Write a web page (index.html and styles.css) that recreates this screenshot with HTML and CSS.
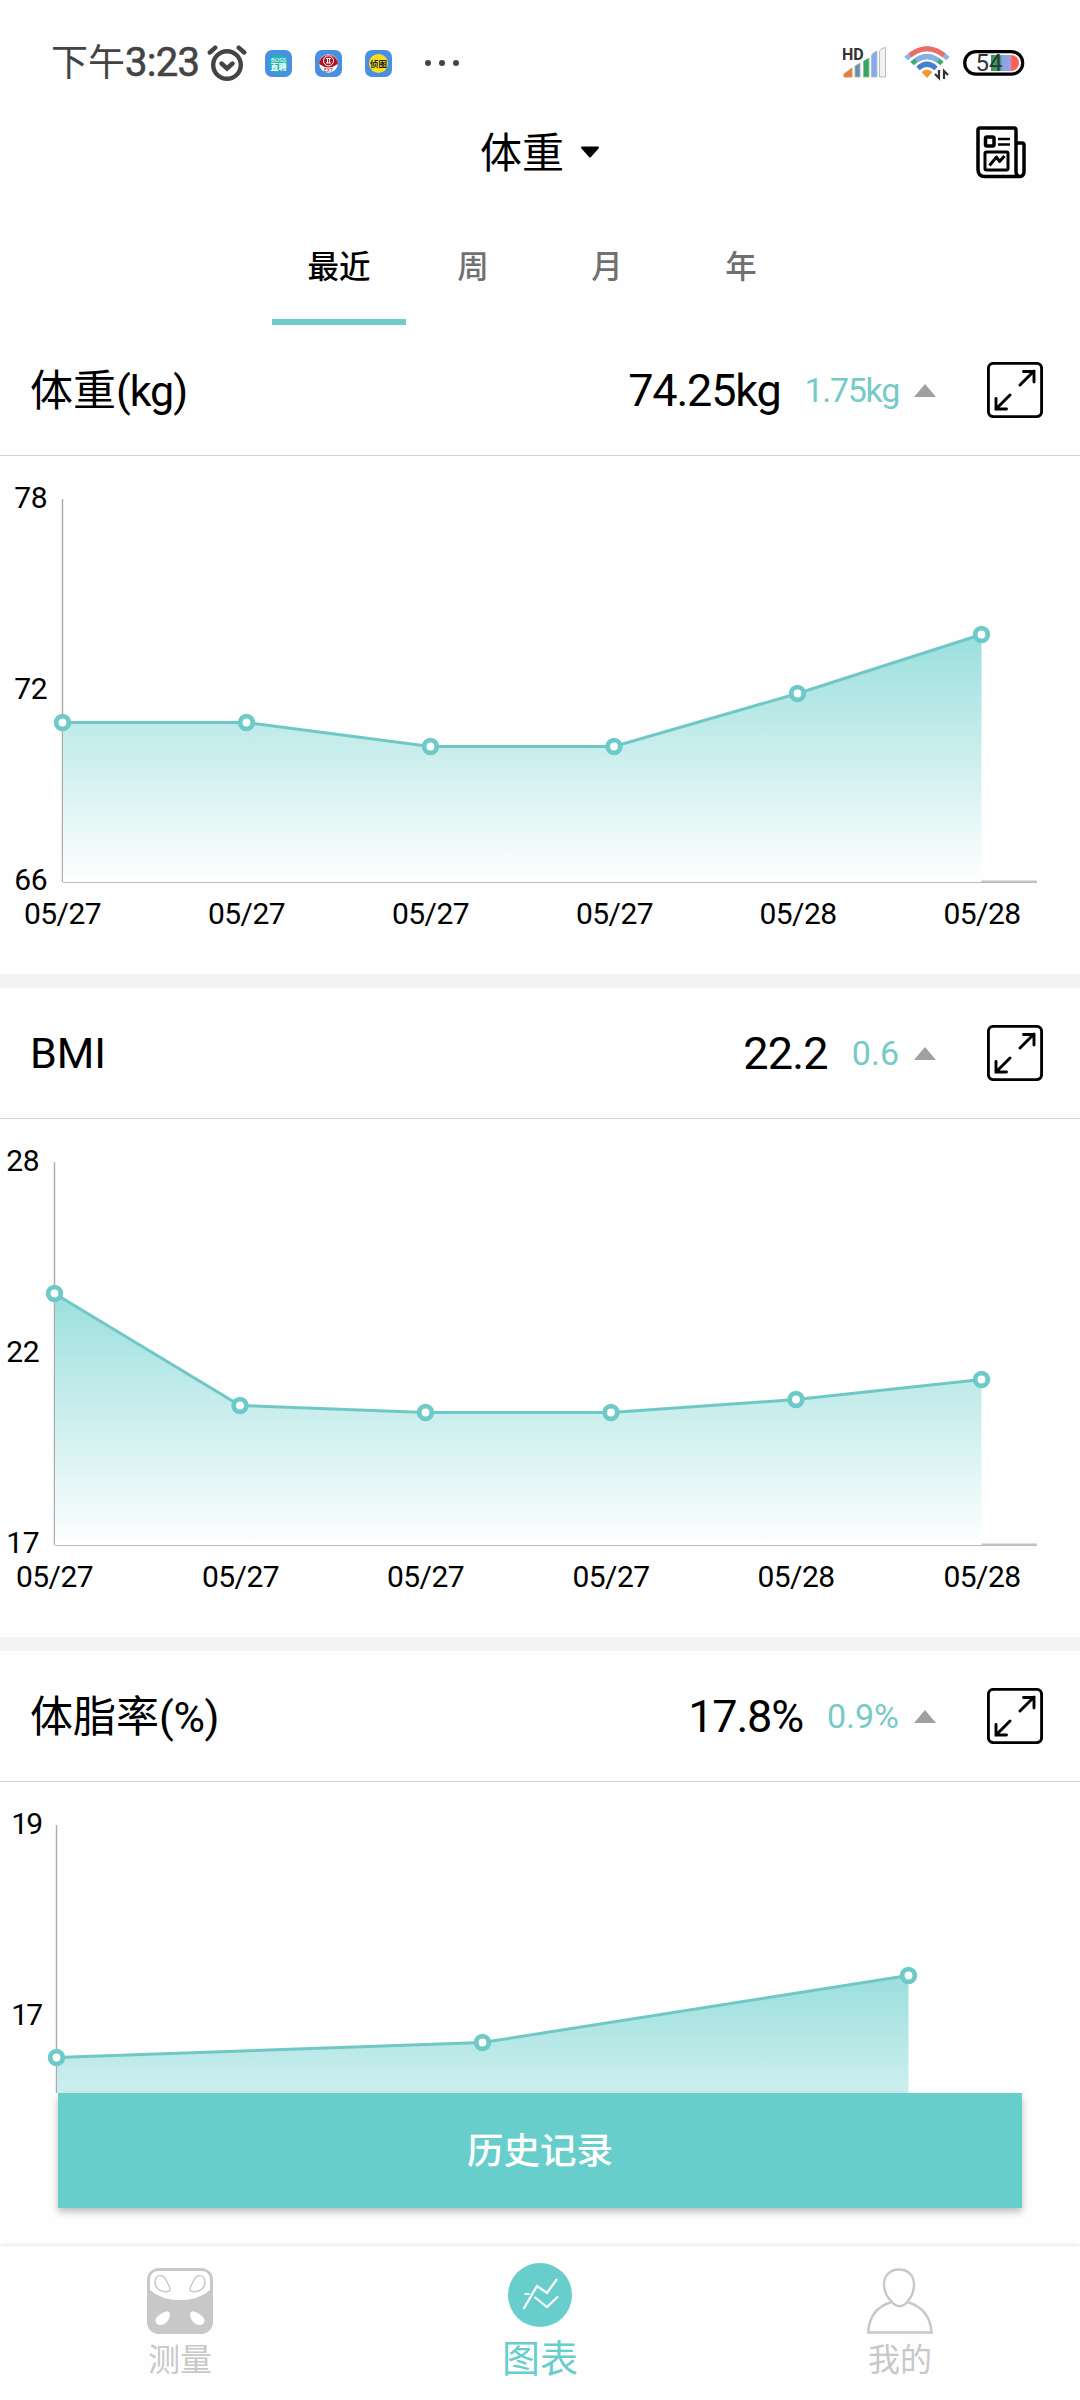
FILE: index.html
```html
<!DOCTYPE html>
<html lang="zh-CN">
  <head>
    <meta charset="UTF-8" />
    <title>体重图表</title>
    <link rel="stylesheet" href="styles.css">
  </head>
  <body>
    <div class="status-bar">
      <div class="status-left">
        <span class="time">下午<span class="digits">3:23</span></span>
        <svg class="alarm" width="40" height="36" viewBox="0 0 40 36" fill="none" stroke="#444" stroke-width="4.4" stroke-linecap="round">
          <circle cx="20" cy="20" r="13.800" />
          <path d="M14.5 18.500l5.500 5 5.500-5M2.800 7.500l5.500-4.800M37.200 7.500l-5.500-4.800" />
        </svg>
        <svg class="app-icon" width="27" height="27" viewBox="0 0 27 27">
          <rect width="27" height="27" rx="7" fill="#4a90e2" />
          <circle cx="13.5" cy="13.5" r="9.5" fill="#21b5b5" />
          <text x="13.5" y="11.5" font-size="6" textLength="15">BOSS</text>
          <text x="13.5" y="19.5" font-size="8" font-weight="700">直聘</text>
        </svg>
        <svg class="app-icon" width="27" height="27" viewBox="0 0 27 27">
          <rect width="27" height="27" rx="7" fill="#4a90e2" />
          <circle cx="13.5" cy="13.5" r="9.3" fill="#fff" />
          <path d="M4.2 14a9.3 9.3 0 1 1 18.6 0q-9.3 7-18.6 0z" fill="#b0131d" />
          <circle cx="13.5" cy="10.8" r="5" fill="none" stroke="#fff" stroke-width="1" />
          <path d="M11 8.500h5M11 13h5M12.500 8.500v4.500M14.500 8.500v4.500" stroke="#fff" stroke-width="1" />
          <text class="red" x="13.5" y="22" font-size="5">EXT</text>
        </svg>
        <svg class="app-icon" width="27" height="27" viewBox="0 0 27 27">
          <rect width="27" height="27" rx="7" fill="#4a90e2" />
          <circle cx="13.5" cy="13.5" r="9.5" fill="#f7df1e" />
          <text class="dark" x="13.5" y="16.5" font-size="8.5" font-weight="700">侦图</text>
        </svg>
        <svg class="dots" width="36" height="8" viewBox="0 0 36 8" fill="#444">
          <circle cx="4" cy="4" r="3" />
          <circle cx="18" cy="4" r="3" />
          <circle cx="32" cy="4" r="3" />
        </svg>
      </div>
      <div class="status-right">
        <svg width="45" height="34" viewBox="0 0 45 34">
          <path d="M2 31v-3l8-6v9z" fill="#f0793a" stroke="#c99a6a" />
          <path d="M13 31V20l5-3v14z" fill="#5b8fc4" stroke="#b8b884" />
          <path d="M21.500 31V15l5.500-3v19z" fill="#36a463" stroke="#8fbf9f" />
          <path d="M29.500 31V10q0-3 5.500-5v26z" fill="#84a9ea" stroke="#b4bccb" />
          <path d="M37.500 31V6q0-3.500 6-4.500v29.500z" fill="#eff4f2" stroke="#b9bdbb" />
          <text class="hd" x="0" y="13.500">HD</text>
        </svg>
        <svg class="wifi" width="48" height="36" viewBox="0 0 48 36" fill="none" stroke-width="5">
          <path d="M2 13.500Q23 -6 44 13.500" stroke="#93b2e8" />
          <path d="M6 10.300Q23 -2.800 40 10.300" stroke="#ee6b66" />
          <path d="M8 18.500Q23 4.500 38 18.500" stroke="#3faa6c" />
          <path d="M12 15.500Q23 7.700 34 15.500" stroke="#86aee8" />
          <path d="M14 23.500Q23 15 32 23.500" stroke="#4581d0" />
          <path d="M23 33l-5.500-6q5.500-5 11 0z" fill="#f39a2e" />
          <path d="M35 25v8l-4-4M40 34v-8l4 4" stroke="#333" stroke-width="2.200" />
        </svg>
        <svg width="62" height="26" viewBox="0 0 62 26">
          <defs>
            <linearGradient id="power">
              <stop offset="0" stop-color="#2f9e5c" />
              <stop offset="0.330" stop-color="#38a566" />
              <stop offset="0.400" stop-color="#7fa5ea" />
              <stop offset="0.680" stop-color="#a3a0dd" />
              <stop offset="0.760" stop-color="#fb5f55" />
              <stop offset="1" stop-color="#fb5f55" />
            </linearGradient>
          </defs>
          <path d="M28 5h20a8 8 0 0 1 0 16h-20z" fill="url(#power)" />
          <rect x="1.700" y="1.700" width="58" height="22.500" rx="11.200" fill="none" stroke="#000" stroke-width="3.200" />
          <text class="battery" x="12.500" y="21">54</text>
        </svg>
      </div>
    </div>

    <header>
      <h1>体重</h1>
      <svg class="caret" width="20" height="13" viewBox="0 0 20 13">
        <path d="M2 1.500h16l-8 9z" stroke="#000" stroke-width="2" stroke-linejoin="round" />
      </svg>
      <svg class="report" width="50" height="53" viewBox="0 0 50 53" fill="none" stroke="#000" stroke-width="3.500" stroke-linejoin="round">
        <path d="M44 50.500H9q-7 0-7-7V4q0-2 2-2h34q2 0 2 2v41q0 5.500 4 5.500t4-5.500V19q0-2-2-2h-6" />
        <rect x="9.500" y="11" width="8.500" height="9" rx="1.500" />
        <rect x="9" y="26" width="23" height="18" rx="1.500" stroke-width="3" />
        <path d="M22 13h12M22 18.500h12" stroke-width="2.400" />
        <path d="M13.500 39.500l7-8.500 3 4.500 5-5.500" stroke-width="3" />
      </svg>
    </header>

    <nav class="tabs">
      <a class="tab active">最近</a>
      <a class="tab">周</a>
      <a class="tab">月</a>
      <a class="tab">年</a>
    </nav>

    <!-- shared shapes -->
    <svg class="defs" width="0" height="0">
      <defs>
        <linearGradient id="area" x1="0" y1="0" x2="0" y2="1">
          <stop offset="0" stop-color="#9adfdd" />
          <stop offset="1" stop-color="#fff" />
        </linearGradient>
        <symbol id="expand" viewBox="0 0 56 56">
          <rect x="1.400" y="1.400" width="53.200" height="53.200" rx="5" />
          <path d="M33 23L47 9M36.500 9.500h10.500v10.500M23 33L9 47M9 36.500v10.500h10.500" />
        </symbol>
      </defs>
    </svg>

    <main class="charts">
      <section class="card">
        <div class="card-header">
          <h2 class="raised">体重<span class="unit">(kg)</span></h2>
          <span class="value tight">74.25kg</span>
          <span class="delta tight">1.75kg</span>
          <i class="up"></i>
          <svg class="expand"><use href="#expand" /></svg>
        </div>
        <svg class="chart" width="1080" height="518" viewBox="0 0 1080 518">
          <path class="y-axis" d="M62.500 43V426" />
          <path class="x-axis-end" d="M981 425.500H1037" />
          <path class="area" d="M63 266.500L246.500 266.500 430.500 290.500 614 290.500 797.500 237.500 981.500 178.500V426H63z" />
          <path class="x-axis" d="M63 426.500H1037" />
          <path class="line" d="M62.500 266.500L246.500 266.500 430.500 290.500 614 290.500 797.500 237.500 981.500 178.500" />
          <g class="points">
            <circle cx="62.500" cy="266.500" r="6.300" />
            <circle cx="246.500" cy="266.500" r="6.300" />
            <circle cx="430.500" cy="290.500" r="6.300" />
            <circle cx="614" cy="290.500" r="6.300" />
            <circle cx="797.500" cy="237.500" r="6.300" />
            <circle cx="981.500" cy="178.500" r="6.300" />
          </g>
          <g class="y-labels">
            <text x="47" y="52">78</text>
            <text x="47" y="243">72</text>
            <text x="47" y="434">66</text>
          </g>
          <g class="x-labels">
            <text x="62.500" y="468">05/27</text>
            <text x="246.500" y="468">05/27</text>
            <text x="430.500" y="468">05/27</text>
            <text x="614.500" y="468">05/27</text>
            <text x="798" y="468">05/28</text>
            <text x="982" y="468">05/28</text>
          </g>
        </svg>
      </section>

      <section class="card">
        <div class="card-header">
          <h2>BMI</h2>
          <span class="value medium">22.2</span>
          <span class="delta">0.6</span>
          <i class="up"></i>
          <svg class="expand"><use href="#expand" /></svg>
        </div>
        <svg class="chart" width="1080" height="518" viewBox="0 0 1080 518">
          <path class="y-axis" d="M54.500 43V426" />
          <path class="x-axis-end" d="M981 425.500H1037" />
          <path class="area" d="M55 174.500L240 286.500 425.500 293.500 611 293.500 796 280.500 981.500 260.500V426H55z" />
          <path class="x-axis" d="M55 426.500H1037" />
          <path class="line" d="M54.500 174.500L240 286.500 425.500 293.500 611 293.500 796 280.500 981.500 260.500" />
          <g class="points">
            <circle cx="54.500" cy="174.500" r="6.300" />
            <circle cx="240" cy="286.500" r="6.300" />
            <circle cx="425.500" cy="293.500" r="6.300" />
            <circle cx="611" cy="293.500" r="6.300" />
            <circle cx="796" cy="280.500" r="6.300" />
            <circle cx="981.500" cy="260.500" r="6.300" />
          </g>
          <g class="y-labels">
            <text x="39" y="52">28</text>
            <text x="39" y="243">22</text>
            <text x="39" y="434">17</text>
          </g>
          <g class="x-labels">
            <text x="54.500" y="468">05/27</text>
            <text x="240.500" y="468">05/27</text>
            <text x="425.500" y="468">05/27</text>
            <text x="611" y="468">05/27</text>
            <text x="796" y="468">05/28</text>
            <text x="982" y="468">05/28</text>
          </g>
        </svg>
      </section>

      <section class="card">
        <div class="card-header">
          <h2 class="raised">体脂率<span class="unit percent">(%)</span></h2>
          <span class="value tight">17.8%</span>
          <span class="delta">0.9%</span>
          <i class="up"></i>
          <svg class="expand"><use href="#expand" /></svg>
        </div>
        <svg class="chart" width="1080" height="518" viewBox="0 0 1080 518">
          <path class="y-axis" d="M56.500 43V426" />
          <path class="area" d="M57 275.500L482.500 260.500 908.500 193.500V426H57z" />
          <path class="line" d="M56.500 275.500L482.500 260.500 908.500 193.500" />
          <g class="points">
            <circle cx="56.500" cy="275.500" r="6.300" />
            <circle cx="482.500" cy="260.500" r="6.300" />
            <circle cx="908.500" cy="193.500" r="6.300" />
          </g>
          <g class="y-labels narrow">
            <text x="41" y="52">19</text>
            <text x="41" y="243">17</text>
          </g>
        </svg>
      </section>
    </main>

    <div class="history">
      <button class="history-button">历史记录</button>
    </div>

    <nav class="bottom-nav">
      <a class="nav-item">
        <svg width="66" height="66" viewBox="0 0 66 66">
          <rect width="66" height="66" rx="12" fill="#c8c8c8" />
          <path d="M3 22V12q0-9 9-9h42q9 0 9 9v10Q52 32 33 32T3 22z" fill="#fff" />
          <g fill="#fff" stroke="#c8c8c8" stroke-width="1.500">
            <path d="M8 13c1-7 8-7 11-1 2 4 6 10 3 11-5 2-15-1-14-10z" />
            <path d="M58 13c-1-7-8-7-11-1-2 4-6 10-3 11 5 2 15-1 14-10z" />
          </g>
          <path d="M22 44c3 3-2 12-7 13-6 1-9-5-4-9 4-3 9-6 11-4zM44 44c-3 3 2 12 7 13 6 1 9-5 4-9-4-3-9-6-11-4z" fill="#fff" />
        </svg>
        <span>测量</span>
      </a>
      <a class="nav-item active">
        <svg width="64" height="64" viewBox="0 0 64 64" fill="none" stroke="#fff" stroke-width="2.200">
          <circle cx="32" cy="32" r="32" fill="#68cecb" stroke="none" />
          <path d="M15.500 46L29 23l10 7 10-14M26.500 34L39 44l11-10.500M16.500 31h5" />
        </svg>
        <span>图表</span>
      </a>
      <a class="nav-item">
        <svg width="66" height="66" viewBox="0 0 66 66" fill="none" stroke="#c8c8c8" stroke-width="2.400">
          <path d="M24.500 33.500C19 28 17 22 17 16.500C17 7.500 23 1.500 32 1.500S47 7.500 47 16.500C47 22 45.500 28 40.500 33.500Q32.500 43 24.500 33.500zM24.500 34Q2 41 1.300 64.500H64.700Q63 41 40.500 34" />
        </svg>
        <span>我的</span>
      </a>
    </nav>
  </body>
</html>
```
FILE: styles.css
```css
* {
  box-sizing: border-box;
}

body {
  width: 1080px;
  height: 2400px;
  margin: 0;
  display: flex;
  flex-direction: column;
  overflow: hidden;
  background-color: #fefefe;
  color: #000;
  font-family: Roboto, "Noto Sans CJK SC", sans-serif;
}

.status-bar {
  height: 126px;
  padding: 0 55px 0 51px;
  display: flex;
  justify-content: space-between;
}

.status-left,
.status-right {
  height: 126px;
  display: flex;
  align-items: center;
}

.time {
  font-size: 37px;
  line-height: 126px;
  color: #444;
}

.time .digits {
  font-size: 40px;
  letter-spacing: -0.7px;
  -webkit-text-stroke: 0.6px #444;
}

.alarm {
  margin-left: 8px;
  margin-right: 18px;
}

.app-icon {
  margin-right: 23px;
}

.app-icon text {
  fill: #fff;
  text-anchor: middle;
}

.app-icon .red {
  fill: #b0131d;
}

.app-icon .dark {
  fill: #222;
}

.dots {
  margin-left: 9px;
}

.hd {
  font-size: 16px;
  font-weight: 700;
  fill: #333;
}

.wifi {
  margin: 0 11px 0 17px;
}

.battery {
  font-size: 24px;
  fill: #333;
}

header {
  height: 54px;
  display: flex;
  align-items: center;
  position: relative;
  justify-content: center;
}

h1 {
  margin: 0;
  padding-bottom: 7px;
  font-size: 42px;
  font-weight: 400;
}

.caret {
  margin-left: 16px;
  margin-bottom: 2px;
}

.report {
  position: absolute;
  right: 54px;
  top: 0;
}

.tabs {
  height: 145px;
  display: flex;
  justify-content: center;
  align-items: flex-end;
}

.tab {
  width: 134px;
  height: 115px;
  padding-bottom: 2px;
  line-height: 115px;
  text-align: center;
  font-size: 31.5px;
  font-weight: 500;
  color: #707070;
  border-bottom: 6px solid transparent;
}

.tab.active {
  color: #000;
  border-bottom-color: #70cac7;
}

.defs {
  position: absolute;
}

.charts {
  height: 1768px;
  overflow: hidden;
}

.card {
  height: 663px;
  border-bottom: 14px solid #f4f4f4;
}

.card-header {
  height: 131px;
  padding: 0 37px 0 30px;
  display: flex;
  align-items: center;
  border-bottom: 1px solid #d2d2d2;
}

h2 {
  margin: 0;
  flex: 1;
  font-size: 43px;
  font-weight: 400;
}

h2.raised {
  padding-bottom: 6px;
}

.unit {
  letter-spacing: -1px;
}

.unit.percent {
  letter-spacing: -0.3px;
}

.value {
  font-size: 45px;
}

.value.medium {
  letter-spacing: -0.8px;
}

.value.tight {
  letter-spacing: -1.2px;
}

.delta {
  margin-left: 24px;
  font-size: 34px;
  color: #76cac8;
}

.delta.tight {
  letter-spacing: -1.3px;
}

.up {
  margin: 0 51px 0 15px;
  border: 11.5px solid transparent;
  border-top: 0;
  border-bottom: 13px solid #a0a0a0;
}

.expand {
  width: 56px;
  height: 56px;
  fill: none;
  stroke: #000;
  stroke-width: 2.9;
  stroke-linecap: round;
}

.chart {
  display: block;
}

.y-axis {
  stroke: #aaa;
  stroke-width: 1.4;
}

.x-axis {
  stroke: #bbb;
}

.x-axis-end {
  stroke: #c4c4c4;
  stroke-width: 2;
}

.area {
  fill: url(#area);
}

.line {
  fill: none;
  stroke: #70c8c6;
  stroke-width: 3;
}

.points {
  fill: #fff;
  stroke: #6dcac8;
  stroke-width: 4.8;
}

.y-labels,
.x-labels {
  font-size: 30px;
}

.y-labels {
  text-anchor: end;
  letter-spacing: -0.5px;
}

.y-labels.narrow {
  letter-spacing: -2px;
}

.x-labels {
  text-anchor: middle;
  letter-spacing: -0.6px;
}

.history {
  height: 153px;
  padding: 0 58px;
}

.history-button {
  display: block;
  width: 964px;
  height: 115px;
  padding: 0 0 5px;
  border: none;
  background-color: #68cecb;
  color: #fff;
  font-family: inherit;
  font-size: 36.5px;
  font-weight: 500;
  box-shadow: 0 4px 7px rgba(0, 0, 0, 0.26);
}

.bottom-nav {
  height: 154px;
  display: flex;
  background-color: #fefefe;
  box-shadow: 0 -1px 4px rgba(0, 0, 0, 0.1);
}

.nav-item {
  flex: 1;
  padding-top: 22px;
  display: flex;
  flex-direction: column;
  align-items: center;
  color: #c8c8c8;
  font-size: 32px;
  line-height: 53px;
}

.nav-item.active {
  padding-top: 17px;
  color: #68cecb;
  font-size: 38px;
  line-height: 64px;
}
```
